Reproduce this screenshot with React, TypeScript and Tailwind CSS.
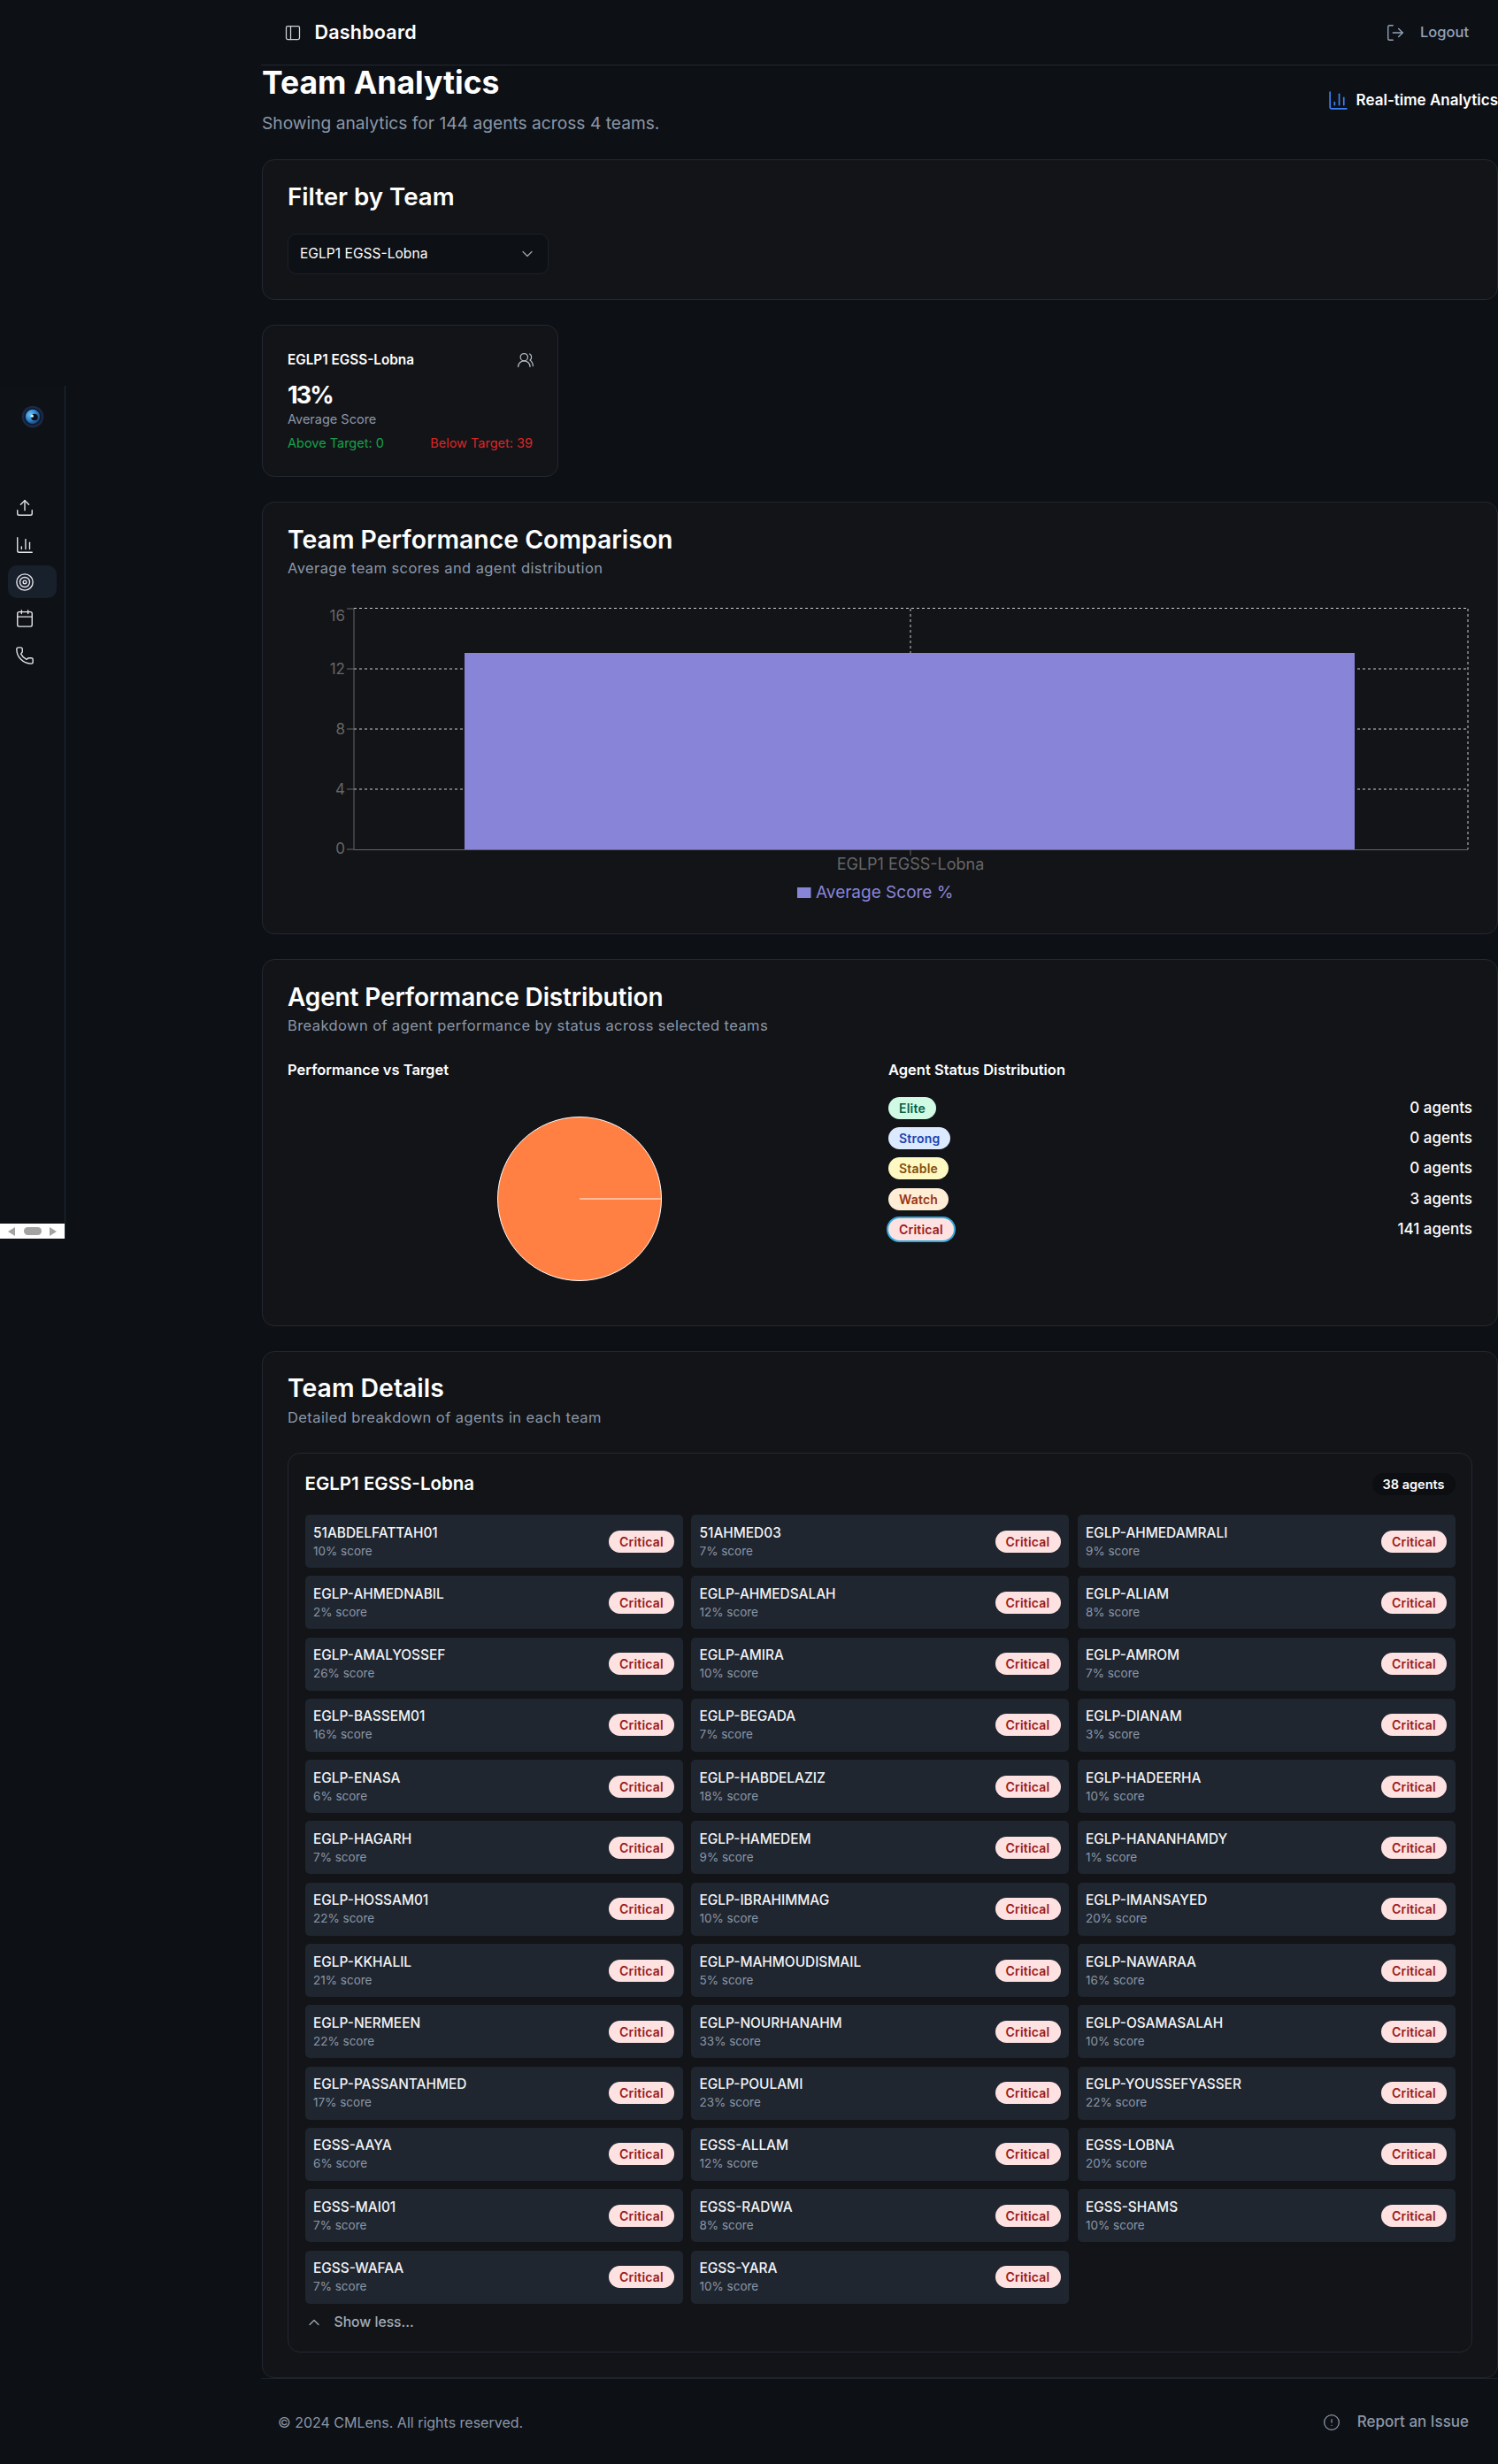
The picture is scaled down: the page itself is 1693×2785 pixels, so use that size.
import React from "react";
import { PanelLeft, LogOut, ChartColumn, ChevronDown, ChevronUp, CircleAlert, UsersRound, Upload, Target, Calendar, Phone } from "lucide-react";

const rows: [string, number][] = [
  ["51ABDELFATTAH01", 10], ["51AHMED03", 7], ["EGLP-AHMEDAMRALI", 9],
  ["EGLP-AHMEDNABIL", 2], ["EGLP-AHMEDSALAH", 12], ["EGLP-ALIAM", 8],
  ["EGLP-AMALYOSSEF", 26], ["EGLP-AMIRA", 10], ["EGLP-AMROM", 7],
  ["EGLP-BASSEM01", 16], ["EGLP-BEGADA", 7], ["EGLP-DIANAM", 3],
  ["EGLP-ENASA", 6], ["EGLP-HABDELAZIZ", 18], ["EGLP-HADEERHA", 10],
  ["EGLP-HAGARH", 7], ["EGLP-HAMEDEM", 9], ["EGLP-HANANHAMDY", 1],
  ["EGLP-HOSSAM01", 22], ["EGLP-IBRAHIMMAG", 10], ["EGLP-IMANSAYED", 20],
  ["EGLP-KKHALIL", 21], ["EGLP-MAHMOUDISMAIL", 5], ["EGLP-NAWARAA", 16],
  ["EGLP-NERMEEN", 22], ["EGLP-NOURHANAHM", 33], ["EGLP-OSAMASALAH", 10],
  ["EGLP-PASSANTAHMED", 17], ["EGLP-POULAMI", 23], ["EGLP-YOUSSEFYASSER", 22],
  ["EGSS-AAYA", 6], ["EGSS-ALLAM", 12], ["EGSS-LOBNA", 20],
  ["EGSS-MAI01", 7], ["EGSS-RADWA", 8], ["EGSS-SHAMS", 10],
  ["EGSS-WAFAA", 7], ["EGSS-YARA", 10],
];

function Logo() {
  return (
    <svg width="26" height="26" viewBox="0 0 26 26">
      <defs>
        <radialGradient id="iris" cx="35%" cy="35%" r="75%">
          <stop offset="0%" stopColor="#6cc4f5" />
          <stop offset="55%" stopColor="#2b7fcb" />
          <stop offset="100%" stopColor="#12345f" />
        </radialGradient>
      </defs>
      <circle cx="13" cy="13" r="12.3" fill="#1c2a47" />
      <circle cx="13" cy="13" r="10" fill="#0f1a2c" />
      <circle cx="13" cy="13" r="8.2" fill="url(#iris)" />
      <circle cx="15" cy="13.5" r="3.8" fill="#0a0f18" />
      <circle cx="12.3" cy="12.2" r="1.6" fill="#d7ecfa" />
    </svg>
  );
}

function Chart() {
  const ox = 325;
  const X = (v: number) => v - ox;
  return (
    <svg width="1339" height="350" viewBox="0 0 1339 350" className="block">
      <g transform="translate(0,-677)">
        <g stroke="#cccccc" strokeDasharray="3 3" fill="none" strokeWidth="1">
          <line x1={X(400)} x2={X(1659)} y1="687.5" y2="687.5" />
          <line x1={X(400)} x2={X(1659)} y1="756" y2="756" />
          <line x1={X(400)} x2={X(1659)} y1="824" y2="824" />
          <line x1={X(400)} x2={X(1659)} y1="892" y2="892" />
          <line x1={X(1029)} x2={X(1029)} y1="688" y2="960" />
          <line x1={X(1659)} x2={X(1659)} y1="688" y2="960" />
        </g>
        <rect x={X(525)} y="738" width="1006" height="222" fill="#8884d8" />
        <g stroke="#666" strokeWidth="1">
          <line x1={X(400)} x2={X(1659)} y1="960.5" y2="960.5" />
          <line x1={X(400)} x2={X(400)} y1="688" y2="960" />
          <line x1={X(392)} x2={X(400)} y1="688" y2="688" />
          <line x1={X(392)} x2={X(400)} y1="756" y2="756" />
          <line x1={X(392)} x2={X(400)} y1="824" y2="824" />
          <line x1={X(392)} x2={X(400)} y1="892" y2="892" />
          <line x1={X(392)} x2={X(400)} y1="960" y2="960" />
          <line x1={X(1029)} x2={X(1029)} y1="960" y2="967" />
        </g>
        <g fill="#666" fontSize="17" textAnchor="end">
          <text x={X(390)} y="702">16</text>
          <text x={X(390)} y="762">12</text>
          <text x={X(390)} y="830">8</text>
          <text x={X(390)} y="898">4</text>
          <text x={X(390)} y="965">0</text>
        </g>
        <text x={X(1029)} y="983" fill="#666" fontSize="18" textAnchor="middle">EGLP1 EGSS-Lobna</text>
        <rect x={X(901)} y="1003" width="15.5" height="12" fill="#8884d8" />
        <text x={X(922)} y="1015" fill="#8884d8" fontSize="19">Average Score %</text>
      </g>
    </svg>
  );
}

function Pie() {
  return (
    <svg width="660" height="190" viewBox="0 0 660 190" className="block">
      <circle cx="330" cy="95" r="92.5" fill="#ff8042" stroke="#fff" strokeWidth="1" />
      <line x1="330" y1="95" x2="422.5" y2="95" stroke="#ffd0b8" strokeWidth="1.5" />
    </svg>
  );
}

function Badge({ label, cls }: { label: string; cls: string }) {
  return (
    <span className={`inline-flex items-center h-[25px] px-3 rounded-full text-[14px] font-semibold tracking-[0.015em] ${cls}`}>
      {label}
    </span>
  );
}

const critical = "bg-[#fee2e2] text-[#991b1b]";

const statuses: [string, string, string][] = [
  ["Elite", "bg-[#d1fae5] text-[#065f46]", "0 agents"],
  ["Strong", "bg-[#dbeafe] text-[#1e40af]", "0 agents"],
  ["Stable", "bg-[#fef9c3] text-[#854d0e]", "0 agents"],
  ["Watch", "bg-[#ffedd5] text-[#9a3412]", "3 agents"],
  ["Critical", `${critical} ring-2 ring-[#38a9dc]`, "141 agents"],
];

const card = "rounded-[14px] border border-[#232831] bg-[#121418]";
const sub = "text-[16.5px] leading-[22px] tracking-[0.025em] text-[#8b97a8]";

export default function App() {
  return (
    <div className="flex w-[1693px] h-[2785px] overflow-hidden bg-[#0d1015] text-white font-['Inter',sans-serif]">
      <aside className="w-[295px] shrink-0 pt-[436px]">
        <div className="w-[74px] h-[964px] border-r border-[#1f2a35] bg-[#0e1116] flex flex-col">
          <div className="flex justify-center pt-[22px] pl-[1px]"><Logo /></div>
          <nav className="mt-[71.5px] flex flex-col gap-[4.75px] text-[#e5e7eb] px-[9px]">
            <div className="h-[37px] flex items-center pl-[7.7px]"><Upload size={22} strokeWidth={1.5} /></div>
            <div className="h-[37px] flex items-center pl-[7.7px]"><ChartColumn size={22} strokeWidth={1.5} /></div>
            <div className="h-[37px] flex items-center pl-[7.7px] rounded-[10px] bg-[#18202b]"><Target size={22} strokeWidth={1.5} /></div>
            <div className="h-[37px] flex items-center pl-[7.7px]"><Calendar size={22} strokeWidth={1.5} /></div>
            <div className="h-[37px] flex items-center pl-[7.7px]"><Phone size={22} strokeWidth={1.5} /></div>
          </nav>
          <div className="mt-auto h-[17px] bg-white flex items-center justify-between px-[9px]">
            <span className="w-0 h-0 border-y-[5px] border-y-transparent border-r-[8px] border-r-[#a3a3a3]" />
            <span className="w-[20px] h-[9px] rounded-full bg-[#a3a3a3]" />
            <span className="w-0 h-0 border-y-[5px] border-y-transparent border-l-[8px] border-l-[#a3a3a3]" />
          </div>
        </div>
      </aside>

      <main className="w-[1398px] shrink-0 flex flex-col">
        <header className="h-[74px] shrink-0 border-b border-[#232831] flex items-center justify-between pl-[25.5px] pr-[33px]">
          <div className="flex items-center gap-[15px]">
            <PanelLeft size={20} strokeWidth={1.5} className="text-[#d1d5db]" />
            <span className="text-[21.5px] font-semibold tracking-[0.01em]">Dashboard</span>
          </div>
          <div className="flex items-center gap-[17px] text-[#94a3b8]">
            <LogOut size={22} strokeWidth={1.5} />
            <span className="text-[16.5px] font-medium">Logout</span>
          </div>
        </header>

        <section className="h-[106px] shrink-0 flex justify-between pl-[1px]">
          <div>
            <h1 className="text-[35.5px] leading-[40px] font-bold">Team Analytics</h1>
            <p className="mt-[12px] text-[19.2px] leading-[26px] text-[#8b97a8]">Showing analytics for 144 agents across 4 teams.</p>
          </div>
          <div className="pt-[26.5px] flex items-start gap-[8px]">
            <ChartColumn size={25} strokeWidth={1.6} className="text-[#3b82f6]" />
            <span className="text-[17px] leading-[25px] font-semibold whitespace-nowrap">Real-time Analytics</span>
          </div>
        </section>

        <div className="flex flex-col gap-[28px] pl-[1px]">
          <section className={`${card} h-[159px] px-[28px] pt-[25px]`}>
            <h2 className="text-[27.7px] leading-[32px] font-semibold">Filter by Team</h2>
            <div className="mt-[26px] w-[295px] h-[46px] rounded-[10px] border border-[#1d2128] bg-[#0d1015] flex items-center justify-between pl-[13px] pr-[13px]">
              <span className="text-[15.6px]">EGLP1 EGSS-Lobna</span>
              <ChevronDown size={20} strokeWidth={1.5} className="text-[#9ca3af]" />
            </div>
          </section>

          <section className={`${card} w-[335px] h-[172px] px-[28px] pt-[29px]`}>
            <div className="flex justify-between items-center h-[20px]">
              <span className="text-[15.3px] font-semibold">EGLP1 EGSS-Lobna</span>
              <UsersRound size={20} strokeWidth={1.5} className="text-[#b3bac5] -mr-[2px]" />
            </div>
            <div className="mt-[14px] text-[27px] leading-[32px] font-bold tracking-[-0.07em]">13%</div>
            <div className="mt-[2px] text-[14.5px] leading-[18px] text-[#8b97a8]">Average Score</div>
            <div className="mt-[9px] flex justify-between text-[14.5px] leading-[18px]">
              <span className="text-[#16a34a]">Above Target: 0</span>
              <span className="text-[#dc2626]">Below Target: 39</span>
            </div>
          </section>

          <section className={`${card} h-[489px] px-[28px] pt-[25px]`}>
            <h2 className="text-[28.4px] leading-[34px] font-semibold">Team Performance Comparison</h2>
            <p className={`mt-[4px] ${sub}`}>Average team scores and agent distribution</p>
            <div className="mt-[24px]"><Chart /></div>
          </section>

          <section className={`${card} h-[415px] px-[28px] pt-[25px]`}>
            <h2 className="text-[28px] leading-[34px] font-semibold tracking-[-0.005em]">Agent Performance Distribution</h2>
            <p className={`mt-[4px] ${sub}`}>Breakdown of agent performance by status across selected teams</p>
            <div className="mt-[28px] grid grid-cols-[660px_660px] gap-x-[19px]">
              <div>
                <h3 className="text-[16.5px] leading-[22px] font-semibold">Performance vs Target</h3>
                <div className="mt-[40px]"><Pie /></div>
              </div>
              <div>
                <h3 className="text-[16.5px] leading-[22px] font-semibold">Agent Status Distribution</h3>
                <div className="mt-[20px] flex flex-col gap-[9.2px]">
                  {statuses.map(([l, c, n]) => (
                    <div key={l} className="flex items-center justify-between h-[25px]">
                      <Badge label={l} cls={c} />
                      <span className="text-[17px] leading-[25px] font-medium">{n}</span>
                    </div>
                  ))}
                </div>
              </div>
            </div>
          </section>

          <section className={`${card} h-[1161px] pl-[28px] pt-[24px]`}>
            <h2 className="text-[28.4px] leading-[34px] font-semibold">Team Details</h2>
            <p className={`mt-[5px] ${sub}`}>Detailed breakdown of agents in each team</p>
            <div className="mt-[29px] w-[1339px] h-[1017px] rounded-[14px] border border-[#232831] px-[18.5px]">
              <div className="h-[69px] flex items-center justify-between">
                <span className="text-[20.5px] font-semibold">EGLP1 EGSS-Lobna</span>
                <span className="h-[25px] px-3 rounded-full bg-[#0c0e12] flex items-center text-[14.5px] font-semibold">38 agents</span>
              </div>
              <div className="grid grid-cols-3 gap-x-[9.5px] gap-y-[9.3px]">
                {rows.map(([name, score]) => (
                  <div key={name} className="h-[60px] rounded-[5px] bg-[#1f2630] flex items-center justify-between px-[9.5px]">
                    <div className="pt-[1px]">
                      <div className="text-[15.4px] leading-[21px] font-medium text-[#f3f4f6]">{name}</div>
                      <div className="text-[13.5px] leading-[21px] text-[#8b97a8]">{score}% score</div>
                    </div>
                    <Badge label="Critical" cls={critical} />
                  </div>
                ))}
              </div>
              <div className="mt-[9px] h-[24px] flex items-center gap-[13px] text-[#a3acb9]">
                <ChevronUp size={20} strokeWidth={1.5} />
                <span className="text-[15.7px] font-medium">Show less...</span>
              </div>
            </div>
          </section>
        </div>

        <footer className="flex-1 flex items-center justify-between pl-[19px] pr-[33px] pt-[1px] border-t border-[#1c222b] text-[#8b97a8]">
          <span className="text-[16px]">© 2024 CMLens. All rights reserved.</span>
          <div className="flex items-center gap-[19px]">
            <CircleAlert size={20} strokeWidth={1.5} />
            <span className="text-[17px] font-medium">Report an Issue</span>
          </div>
        </footer>
      </main>
    </div>
  );
}
